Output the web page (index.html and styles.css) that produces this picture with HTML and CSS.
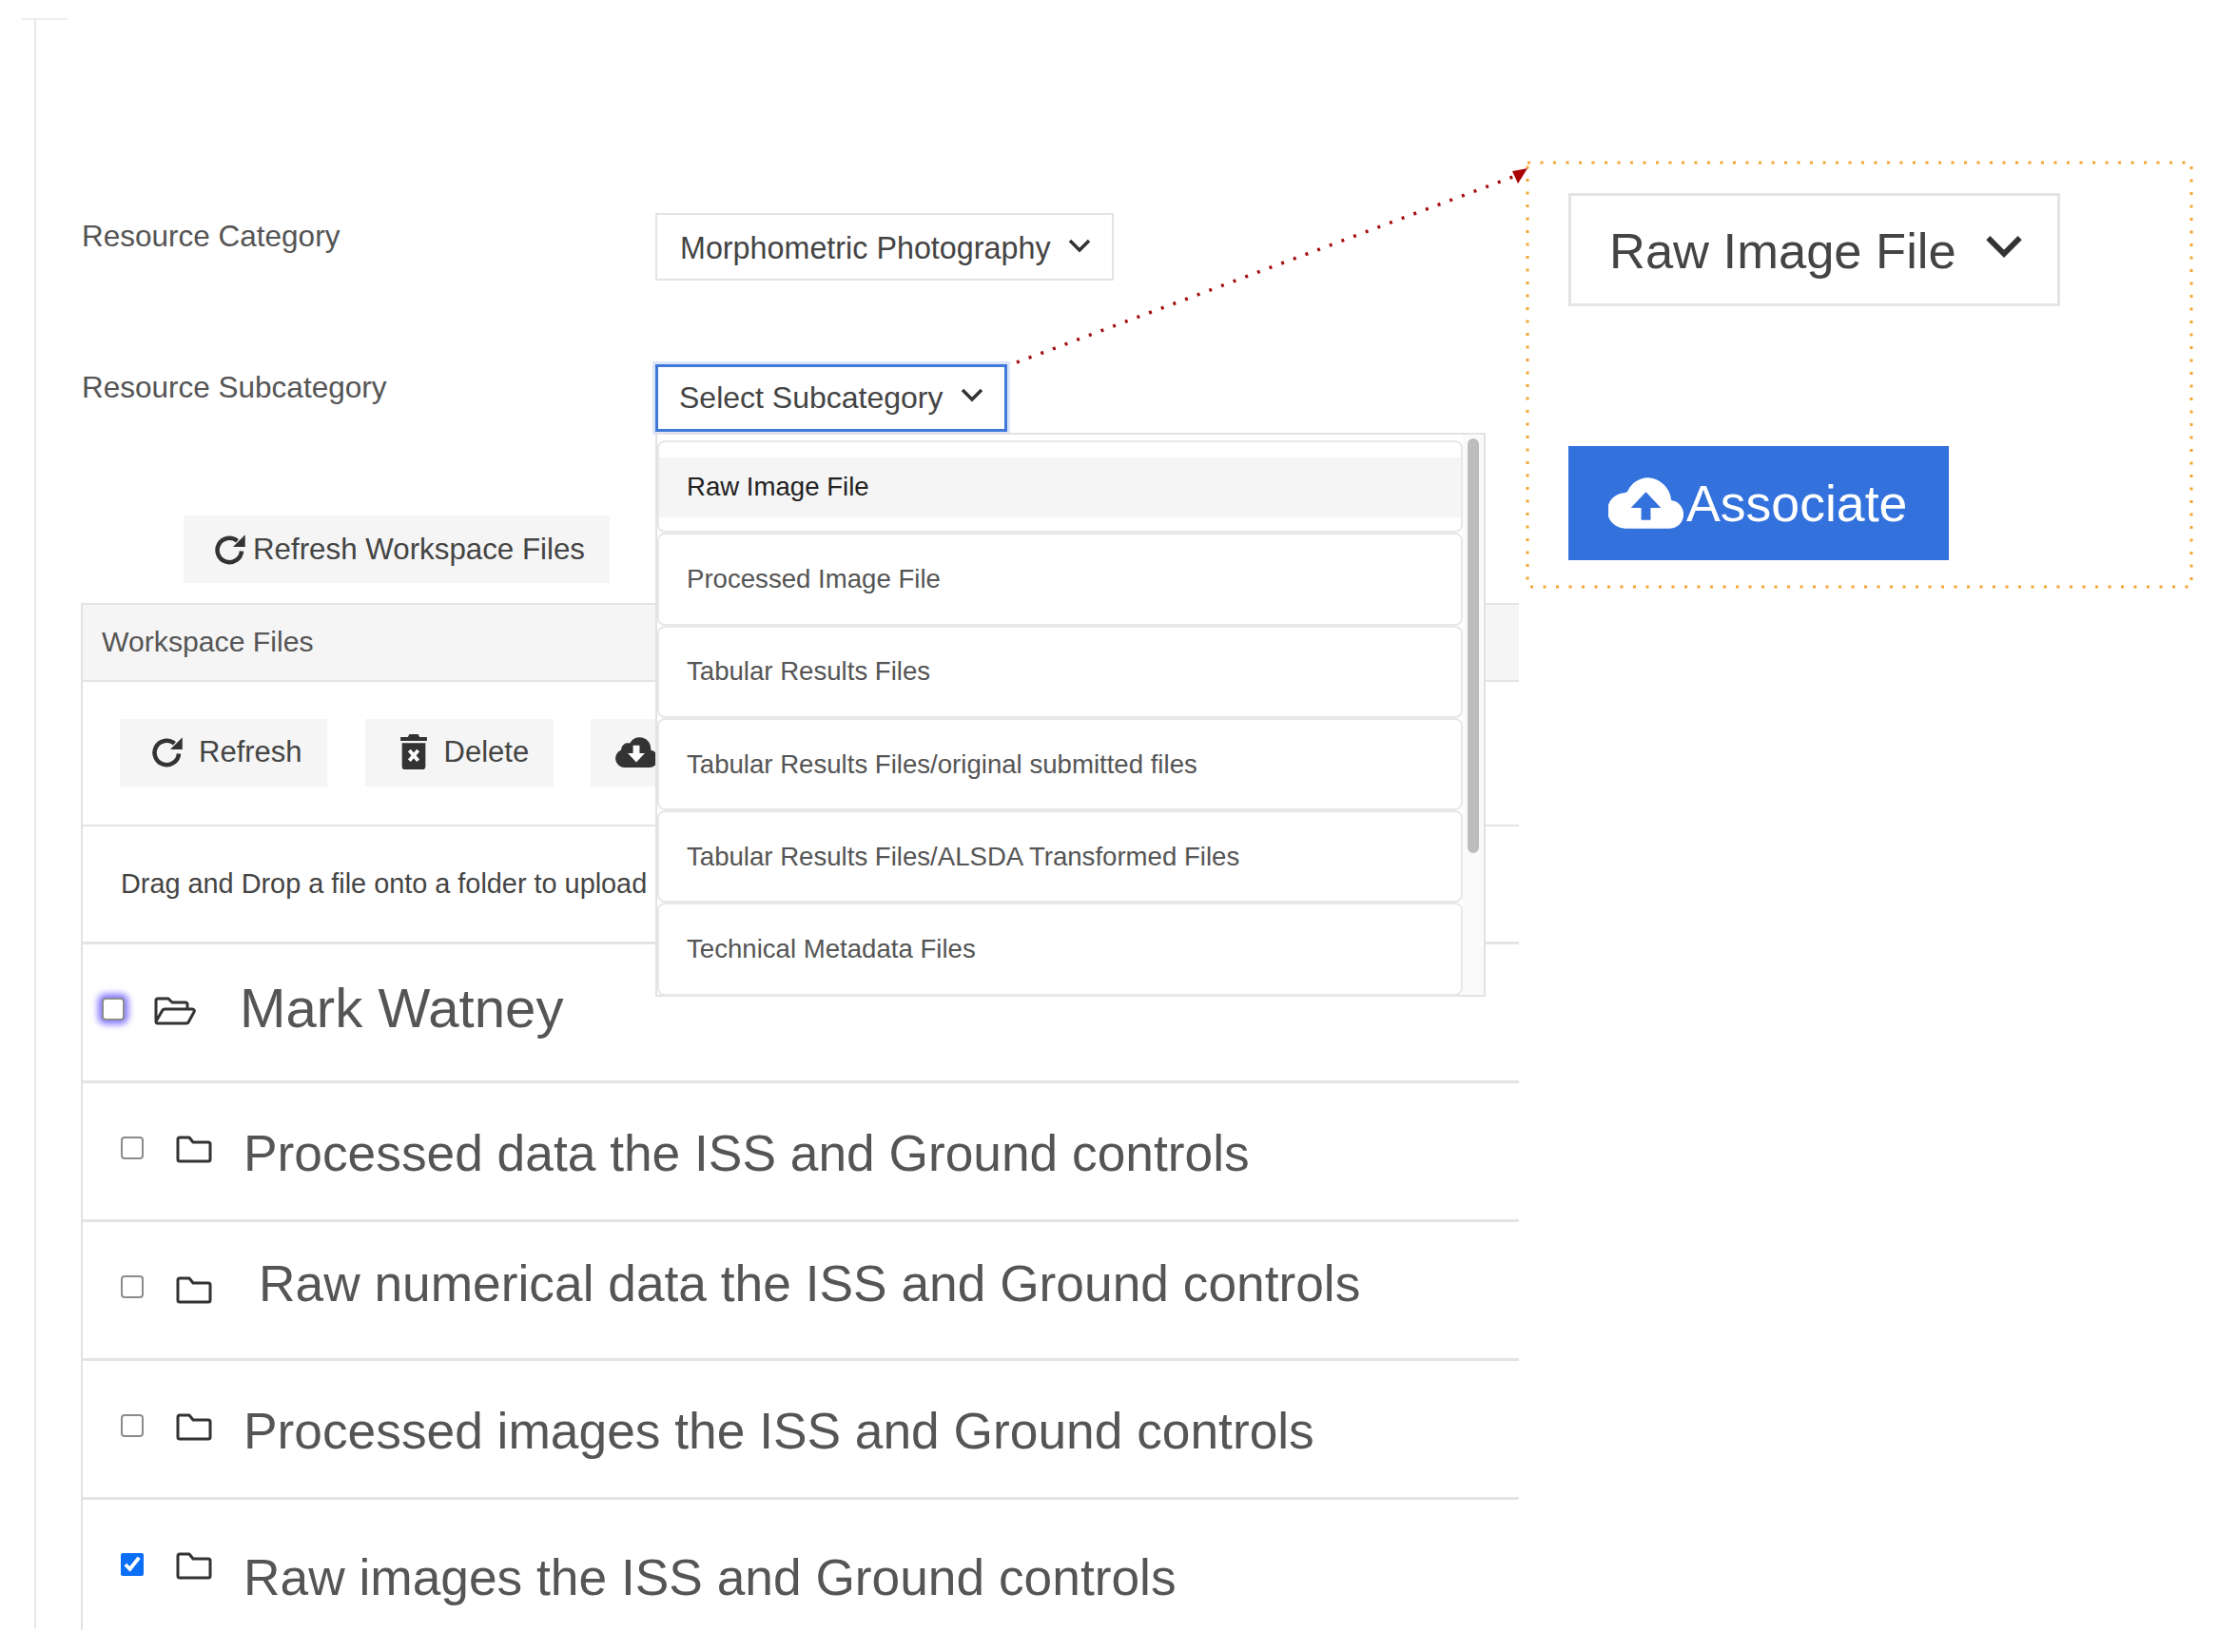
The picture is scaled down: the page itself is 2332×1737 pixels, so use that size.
FILE: index.html
```html
<!DOCTYPE html>
<html>
<head>
	<title>Workspace Files</title>
	<link rel="stylesheet" href="styles.css">
</head>
<body>
	<div class="page">
		<div class="rail">
			<div class="field field-category">
				<label class="field-label">Resource Category</label>
				<div class="select">
					<span>Morphometric Photography</span>
					<svg class="chev" viewBox="0 0 24 16"><path d="M2 3l10 10L22 3"/></svg>
				</div>
			</div>
			<div class="field field-sub">
				<label class="field-label">Resource Subcategory</label>
				<div class="select-wrap">
					<div class="select select-open">
						<span>Select Subcategory</span>
						<svg class="chev" viewBox="0 0 24 16"><path d="M2 3l10 10L22 3"/></svg>
					</div>
					<div class="menu">
						<ul class="menu-list">
							<li class="menu-item is-active"><span>Raw Image File</span></li>
							<li class="menu-item"><span>Processed Image File</span></li>
							<li class="menu-item"><span>Tabular Results Files</span></li>
							<li class="menu-item"><span>Tabular Results Files/original submitted files</span></li>
							<li class="menu-item"><span>Tabular Results Files/ALSDA Transformed Files</span></li>
							<li class="menu-item"><span>Technical Metadata Files</span></li>
						</ul>
						<div class="scroll"><div class="thumb"></div></div>
					</div>
				</div>
			</div>

			<div class="refresh-line">
				<button class="btn btn-wide">
					<svg class="ico ico-redo" viewBox="0 0 24 24"><path class="st" d="M20 13a8.500 8.500 0 1 1-3-7.200"/><path d="M22.500 1.500v8.500h-8.500z"/></svg>
					<span>Refresh Workspace Files</span>
				</button>
			</div>

			<div class="card">
				<div class="card-head">Workspace Files</div>
				<div class="toolbar">
					<button class="btn">
						<svg class="ico ico-redo" viewBox="0 0 24 24"><path class="st" d="M20 13a8.500 8.500 0 1 1-3-7.200"/><path d="M22.500 1.500v8.500h-8.500z"/></svg>
						<span>Refresh</span>
					</button>
					<button class="btn btn-del">
						<svg class="ico ico-trash" viewBox="0 0 18 24"><path d="M6 0h6l1 2h5v2.500H0V2h5zM1 6h16v16a2 2 0 0 1-2 2H3a2 2 0 0 1-2-2z"/><path class="x" d="M6 11l6 7M12 11l-6 7"/></svg>
						<span>Delete</span>
					</button>
					<button class="btn btn-dl">
						<svg class="ico ico-cloud" viewBox="0 0 32 24"><path d="M27 10.500A8.500 8.500 0 0 0 11 5.500a5 5 0 0 0-6.500 5A7 7 0 0 0 7 24h19a6.800 6.800 0 0 0 1-13.500z"/><path class="cut" d="M13.500 7h5v6h4l-6.500 7-6.500-7h4z"/></svg>
					</button>
				</div>
				<div class="hint">Drag and Drop a file onto a folder to upload</div>

				<div class="row row-root">
					<input class="check check-focus" type="checkbox">
					<svg class="folder folder-open" viewBox="0 0 44 30"><path d="M2 26V4a2 2 0 0 1 2-2h11l4 4h14a2 2 0 0 1 2 2v4M2 26l7-12a3 3 0 0 1 2-1h29a2 2 0 0 1 2 3l-6 11a3 3 0 0 1-2 1H4a2 2 0 0 1-2-2z"/></svg>
					<span class="name name-root">Mark Watney</span>
				</div>
				<div class="row">
					<input class="check" type="checkbox">
					<svg class="folder" viewBox="0 0 38 29"><path d="M2 25V4a2 2 0 0 1 2-2h10l4 5h16a2 2 0 0 1 2 2v16a2 2 0 0 1-2 2H4a2 2 0 0 1-2-2z"/></svg>
					<span class="name">Processed data the ISS and Ground controls</span>
				</div>
				<div class="row row-shift">
					<input class="check" type="checkbox">
					<svg class="folder" viewBox="0 0 38 29"><path d="M2 25V4a2 2 0 0 1 2-2h10l4 5h16a2 2 0 0 1 2 2v16a2 2 0 0 1-2 2H4a2 2 0 0 1-2-2z"/></svg>
					<span class="name">Raw numerical data the ISS and Ground controls</span>
				</div>
				<div class="row">
					<input class="check" type="checkbox">
					<svg class="folder" viewBox="0 0 38 29"><path d="M2 25V4a2 2 0 0 1 2-2h10l4 5h16a2 2 0 0 1 2 2v16a2 2 0 0 1-2 2H4a2 2 0 0 1-2-2z"/></svg>
					<span class="name">Processed images the ISS and Ground controls</span>
				</div>
				<div class="row row-last">
					<input class="check" type="checkbox" checked>
					<svg class="folder" viewBox="0 0 38 29"><path d="M2 25V4a2 2 0 0 1 2-2h10l4 5h16a2 2 0 0 1 2 2v16a2 2 0 0 1-2 2H4a2 2 0 0 1-2-2z"/></svg>
					<span class="name">Raw images the ISS and Ground controls</span>
				</div>
			</div>
		</div>

		<svg class="marks" viewBox="0 0 2332 1737">
			<rect class="dots-orange" x="1606" y="171" width="698" height="446"/>
			<line class="dots-red" x1="1069" y1="381" x2="1596" y2="184"/>
			<path class="head" d="M1606 177l-16 3 6 13z"/>
		</svg>

		<div class="callout">
			<div class="callout-select">
				<span>Raw Image File</span>
				<svg class="chev chev-big" viewBox="0 0 24 16"><path d="M2 3l10 10L22 3"/></svg>
			</div>
			<button class="associate">
				<svg class="cloud-up" viewBox="0 0 80 54"><path d="M67 24A26 26 0 0 0 42 0 25 25 0 0 0 20 15a18 18 0 0 0-3 1A19 19 0 0 0 19 54h44a15 15 0 0 0 4-30z"/><path class="cut" d="M40 15l16 17H45v13h-10V32H24z"/></svg>
				<span>Associate</span>
			</button>
		</div>
	</div>
</body>
</html>
```
FILE: styles.css
```css
*{
	margin: 0;
	padding: 0;
	box-sizing: border-box;
	list-style: none;
}
body{
	margin: 0;
	background: #fff;
	font-family: "Liberation Sans", Arial, sans-serif;
	color: #555;
}
.page{
	position: relative;
	width: 2332px;
	height: 1737px;
	overflow: hidden;
	padding: 19px 0 0 36px;
}
.rail{
	position: relative;
	height: 1693px;
	border-left: 2px solid #e6e6e6;
	padding: 205px 0 0 47px;
}
.rail::before{
	content: "";
	position: absolute;
	left: -15px;
	top: 0;
	width: 48px;
	height: 2px;
	background: #eee;
}

/* form */
.field{
	display: flex;
	align-items: flex-start;
}
.field-sub{
	margin-top: 88px;
}
.field-label{
	width: 604px;
	padding: 4px 0 0 1px;
	font-size: 31.500px;
	line-height: 40px;
	color: #555;
}
.select{
	display: flex;
	align-items: center;
	height: 71px;
	width: 482px;
	padding: 4px 22px 0 24px;
	justify-content: space-between;
	border: 2px solid #e4e4e4;
	background: #fff;
	font-size: 32.300px;
	color: #444;
}
.select-wrap{
	position: relative;
}
.select-open{
	width: 370px;
	border: 3px solid #3f78d8;
	box-shadow: 0 0 0 3px #dbe6f8;
	padding: 0 22px 0 22px;
	font-size: 32px;
}
.chev{
	width: 24px;
	height: 16px;
	flex: none;
	fill: none;
	stroke: #333;
	stroke-width: 3.500;
	margin-top: -8px;
}

/* dropdown */
.menu{
	position: absolute;
	left: 0;
	top: 72px;
	width: 873px;
	height: 593px;
	display: flex;
	background: #fafafa;
	border: 2px solid #e2e2e2;
	z-index: 5;
}
.menu-list{
	width: 849px;
	padding-top: 6px;
	background: #fff;
}
.menu-item{
	height: 97.300px;
	display: flex;
	align-items: center;
	padding-left: 29px;
	font-size: 27.600px;
	color: #555;
	background: #fff;
	border: 2px solid #e8e8e8;
	border-radius: 8px;
}
.menu-item.is-active{
	color: #222;
	background: linear-gradient(#fff 16px, #f5f5f5 16px, #f5f5f5 79px, #fff 79px);
}
.scroll{
	flex: 1;
	padding: 4px 5px 0 5px;
}
.thumb{
	width: 12px;
	height: 436px;
	border-radius: 6px;
	background: #bdbdbd;
}

/* buttons */
.btn{
	display: inline-flex;
	align-items: center;
	height: 71px;
	border: 0;
	background: #f5f5f5;
	font-family: inherit;
	font-size: 31px;
	color: #444;
	padding: 0 26px 2px 32px;
	gap: 15px;
	flex: none;
}
.btn-del{
	width: 198px;
	padding-right: 0;
	gap: 17px;
}
.btn-dl{
	width: 240px;
	padding-left: 26px;
	margin-left: -1px;
}
.ico{
	flex: none;
	fill: #333;
}
.ico-redo{
	width: 36px;
	height: 36px;
}
.ico-redo .st{
	fill: none;
	stroke: #333;
	stroke-width: 3;
}
.ico-trash{
	width: 30px;
	height: 37px;
	margin-left: 4px;
}
.ico .x{
	fill: none;
	stroke: #fff;
	stroke-width: 2.500;
}
.ico-cloud{
	width: 44px;
	height: 33px;
}
.ico .cut{
	fill: #fff;
}
.refresh-line{
	margin-top: 88px;
	padding-left: 108px;
}
.btn-wide{
	width: 448px;
	height: 71px;
	padding: 0 0 0 31px;
	gap: 6px;
	font-size: 31.300px;
}

/* workspace card */
.card{
	width: 1512px;
	margin-top: 21px;
	border-left: 2px solid #e2e2e2;
}
.card-head{
	height: 83px;
	padding-left: 20px;
	line-height: 78px;
	font-size: 30.200px;
	background: #f5f5f5;
	border-top: 2px solid #e4e4e4;
	border-bottom: 2px solid #e4e4e4;
}
.toolbar{
	display: flex;
	height: 152px;
	gap: 40px;
	padding: 39px 0 0 39px;
	border-bottom: 2px solid #e4e4e4;
}
.hint{
	height: 124px;
	padding: 42px 0 0 40px;
	font-size: 28.850px;
	line-height: 36px;
	color: #444;
	border-bottom: 3px solid #e4e4e4;
}
.row{
	display: flex;
	align-items: flex-start;
	height: 146px;
	padding-top: 56px;
	border-bottom: 3px solid #e4e4e4;
}
.row-last{
	height: 137px;
	border-bottom: 0;
}
.check{
	width: 24px;
	height: 24px;
	margin: 0 0 0 40px;
	flex: none;
	accent-color: #0b6ef6;
}
.check:not(:checked){
	appearance: none;
	background: #fff;
	border: 2px solid #8c8c8c;
	border-radius: 4px;
}
.check-focus{
	margin-left: 20px;
	box-shadow: 0 0 7px 4px #8577ff;
}
.folder{
	flex: none;
	width: 38px;
	height: 29px;
	margin: -1px 0 0 34px;
	fill: none;
	stroke: #333;
	stroke-width: 3;
	stroke-linejoin: round;
}
.folder-open{
	width: 44px;
	height: 30px;
	margin: -1px 0 0 31px;
}
.name{
	margin-left: 33px;
	margin-top: -12px;
	font-size: 53.300px;
	line-height: 60px;
	white-space: nowrap;
	color: #555;
}
.name-root{
	margin-left: 46px;
	margin-top: -24px;
	font-size: 58.200px;
	line-height: 70px;
}
.row-shift .folder{
	margin-top: 1px;
}
.row-shift .name{
	margin-left: 49px;
	margin-top: -21px;
}
.row-last .name{
	margin-top: -4px;
}

/* annotation on top of the page */
.marks{
	position: absolute;
	left: 0;
	top: 0;
	width: 2332px;
	height: 1737px;
	pointer-events: none;
	z-index: 6;
}
.dots-orange{
	fill: none;
	stroke: #f5a733;
	stroke-width: 3;
	stroke-dasharray: 3 10.500;
}
.dots-red{
	stroke: #a50f0f;
	stroke-width: 3.500;
	stroke-dasharray: 3 10.500;
}
.head{
	fill: #a00;
}
.callout{
	position: absolute;
	left: 1649px;
	top: 203px;
	width: 517px;
	z-index: 7;
}
.callout-select{
	display: flex;
	align-items: center;
	justify-content: space-between;
	height: 119px;
	border: 3px solid #e4e4e4;
	padding: 2px 36px 0 40px;
	font-size: 52.500px;
	color: #444;
}
.chev-big{
	width: 40px;
	height: 27px;
	margin-top: -10px;
}
.associate{
	display: flex;
	align-items: center;
	width: 400px;
	height: 120px;
	margin-top: 147px;
	padding-left: 42px;
	gap: 3px;
	border: 0;
	background: #3371dc;
	color: #fff;
	font-family: inherit;
	font-size: 53.600px;
}
.cloud-up{
	width: 79px;
	height: 54px;
	fill: #fff;
	flex: none;
}
.cloud-up .cut{
	fill: #3371dc;
}
```
